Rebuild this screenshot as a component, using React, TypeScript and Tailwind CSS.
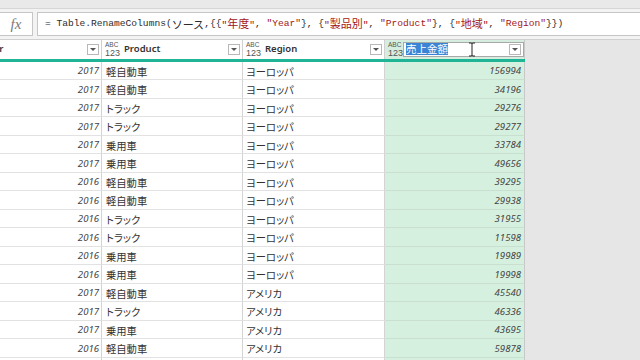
import React from 'react'

const rows: [string, string, string, string][] = [
  ['2017', '軽自動車', 'ヨーロッパ', '156994'],
  ['2017', '軽自動車', 'ヨーロッパ', '34196'],
  ['2017', 'トラック', 'ヨーロッパ', '29276'],
  ['2017', 'トラック', 'ヨーロッパ', '29277'],
  ['2017', '乗用車', 'ヨーロッパ', '33784'],
  ['2017', '乗用車', 'ヨーロッパ', '49656'],
  ['2016', '軽自動車', 'ヨーロッパ', '39295'],
  ['2016', '軽自動車', 'ヨーロッパ', '29938'],
  ['2016', 'トラック', 'ヨーロッパ', '31955'],
  ['2016', 'トラック', 'ヨーロッパ', '11598'],
  ['2016', '乗用車', 'ヨーロッパ', '19989'],
  ['2016', '乗用車', 'ヨーロッパ', '19998'],
  ['2017', '軽自動車', 'アメリカ', '45540'],
  ['2017', 'トラック', 'アメリカ', '46336'],
  ['2017', '乗用車', 'アメリカ', '43695'],
  ['2016', '軽自動車', 'アメリカ', '59878'],
  ['2016', 'トラック', 'アメリカ', '41200'],
]

const Dropdown: React.FC = () => (
  <div className="w-[12px] h-[11px] border border-[#b8b8b8] bg-white flex items-center justify-center shrink-0">
    <div className="w-0 h-0 border-l-[3px] border-r-[3px] border-t-[3px] border-l-transparent border-r-transparent border-t-[#555]" />
  </div>
)

const TypeIcon: React.FC = () => (
  <div className="flex flex-col items-start text-[#555] w-[15px] shrink-0 font-['Liberation_Sans',sans-serif]">
    <span className="text-[6.5px] leading-[6.5px]">ABC</span>
    <span className="text-[9px] leading-[8px]">123</span>
  </div>
)

const J: React.FC<{ children: React.ReactNode }> = ({ children }) => (
  <span className="text-[11px] font-['Noto_Sans_CJK_JP',sans-serif]">{children}</span>
)

const S: React.FC<{ children: React.ReactNode }> = ({ children }) => (
  <span className="text-[#a31515]">{children}</span>
)

const App: React.FC = () => {
  return (
    <div className="w-[640px] h-[360px] overflow-hidden bg-[#f3f3f3] flex flex-col">
      <div className="h-[9px] bg-[#e9e9e9] border-b border-[#d6d6d6] shrink-0" />

      {/* formula bar */}
      <div className="flex items-stretch gap-[4px] mt-[3px] h-[24px] shrink-0">
        <div className="w-[33px] bg-white border border-[#c6c6c6] border-l-0 flex items-center justify-center">
          <span className="font-['Liberation_Serif',serif] italic text-[15px] text-[#7a7a7a]">fx</span>
        </div>
        <div className="flex-1 bg-white border border-r-0 border-[#c6c6c6] flex items-center pl-[7px] whitespace-pre font-['Liberation_Mono','Noto_Sans_CJK_JP',monospace] text-[9.6px] text-[#2b2b2b]">
          {'= Table.RenameColumns('}<J>ソース</J>{',{{'}
          <S>"<J>年度</J>"</S>{', '}<S>"Year"</S>{'}, {'}
          <S>"<J>製品別</J>"</S>{', '}<S>"Product"</S>{'}, {'}
          <S>"<J>地域</J>"</S>{', '}<S>"Region"</S>{'}})'}
        </div>
      </div>

      {/* table */}
      <div className="mt-[3px] flex flex-col flex-1 overflow-hidden">
        {/* header */}
        <div className="flex h-[19.5px] shrink-0 border-t border-[#d0d0d0]">
          <div className="flex ml-[-39px]">
            <div className="w-[141px] bg-white border-r border-[#d0d0d0] flex items-center pl-[3px] pr-[2px]">
              <TypeIcon />
              <span className="ml-[4px] text-[9.5px] font-semibold text-[#333] font-['Noto_Sans',sans-serif]">Year</span>
              <div className="flex-1" />
              <Dropdown />
            </div>
            <div className="w-[141px] bg-white border-r border-[#d0d0d0] flex items-center pl-[3px] pr-[2px]">
              <TypeIcon />
              <span className="ml-[4px] text-[9.5px] font-semibold text-[#333] font-['Noto_Sans',sans-serif]">Product</span>
              <div className="flex-1" />
              <Dropdown />
            </div>
            <div className="w-[142px] bg-white border-r border-[#d0d0d0] flex items-center pl-[3px] pr-[2px]">
              <TypeIcon />
              <span className="ml-[4px] text-[9.5px] font-semibold text-[#333] font-['Noto_Sans',sans-serif]">Region</span>
              <div className="flex-1" />
              <Dropdown />
            </div>
            <div className="w-[140px] bg-[#d6eedf] border-r border-[#c8c8c8] flex items-center pl-[3px] py-[2px]">
              <TypeIcon />
              <div className="flex-1 self-stretch bg-white border border-[#a8a8a8] flex items-center pl-[2px] pr-[2px]">
                <span className="bg-[#3a84d6] text-white text-[10.5px] leading-[12px] font-['Noto_Sans_CJK_JP',sans-serif]">売上金額</span>
                <svg width="8" height="15" viewBox="0 0 8 15" className="ml-[20px]">
                  <path d="M1 1 h2 q1 0 1 1 q0 -1 1 -1 h2 M4 2 v11 M1 14 h2 q1 0 1 -1 q0 1 1 1 h2" fill="none" stroke="#222" strokeWidth="1" />
                </svg>
                <div className="flex-1" />
                <Dropdown />
              </div>
            </div>
          </div>
          <div className="flex-1 bg-[#e6e6e6]" />
        </div>

        {/* teal bar */}
        <div className="flex h-[3px] shrink-0">
          <div className="w-[525px] bg-[#20b496]" />
          <div className="flex-1 bg-[#e6e6e6]" />
        </div>

        {rows.map((r, i) => (
          <div key={i} className="flex h-[18.5px] shrink-0">
            <div className="flex ml-[-39px] [font-feature-settings:'palt']">
              <div className="w-[141px] bg-white border-r border-b border-r-[#d4d4d4] border-b-[#e2e2e2] flex items-center justify-end pt-[2px] pr-[2px] text-[9.6px] italic text-[#444] font-['Noto_Sans',sans-serif]">
                {r[0]}
              </div>
              <div className="w-[141px] bg-white border-r border-b border-r-[#d4d4d4] border-b-[#e2e2e2] flex items-center pt-[2px] pl-[4px] text-[10.3px] text-[#333] font-['Noto_Sans_CJK_JP',sans-serif]">
                {r[1]}
              </div>
              <div className="w-[142px] bg-white border-r border-b border-r-[#d4d4d4] border-b-[#e2e2e2] flex items-center pt-[2px] pl-[3px] text-[10.3px] text-[#333] font-['Noto_Sans_CJK_JP',sans-serif]">
                {r[2]}
              </div>
              <div className="w-[140px] bg-[#d6f0df] border-r border-b border-r-[#c8c8c8] border-b-[#c9dfd0] flex items-center justify-end pt-[2px] pr-[3px] text-[9.6px] italic text-[#444] font-['Noto_Sans',sans-serif]">
                {r[3]}
              </div>
            </div>
            <div className="flex-1 bg-[#e6e6e6]" />
          </div>
        ))}
      </div>
    </div>
  )
}

export default App
